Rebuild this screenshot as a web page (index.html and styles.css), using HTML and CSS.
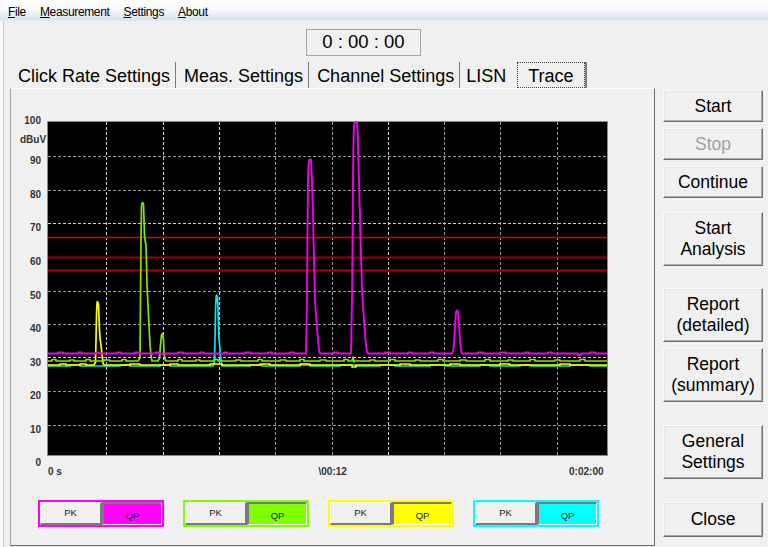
FILE: index.html
```html
<!DOCTYPE html>
<html>
<head>
<meta charset="utf-8">
<title>Trace</title>
<link rel="stylesheet" href="styles.css">
</head>
<body>
<div class="menubar">
  <span class="menu"><u>F</u>ile</span>
  <span class="menu"><u>M</u>easurement</span>
  <span class="menu"><u>S</u>ettings</span>
  <span class="menu"><u>A</u>bout</span>
</div>
<div class="app">
  <div class="timer-row"><div class="timer">0 : 00 : 00</div></div>
  <div class="tabs">
    <div class="tab">Click Rate Settings</div>
    <div class="tab">Meas. Settings</div>
    <div class="tab">Channel Settings</div>
    <div class="tab lisn">LISN</div>
    <div class="tab active"><span class="focus">Trace</span></div>
  </div>
  <div class="main">
    <div class="panel">
      <svg class="chart" width="643" height="392" viewBox="11 89 643 392" xmlns="http://www.w3.org/2000/svg">
        <rect x="47.5" y="121.5" width="560" height="334" fill="#000" stroke="#8a8a8a"/>
        <g class="vgrid" stroke-dasharray="3 2">
          <line class="w" x1="106.5" y1="122" x2="106.5" y2="455"/>
          <line class="w" x1="163.5" y1="122" x2="163.5" y2="455"/>
          <line class="w" x1="219.5" y1="122" x2="219.5" y2="455"/>
          <line class="g" x1="275.5" y1="122" x2="275.5" y2="455"/>
          <line class="g" x1="332.5" y1="122" x2="332.5" y2="455"/>
          <line class="w" x1="388.5" y1="122" x2="388.5" y2="455"/>
          <line class="g" x1="444.5" y1="122" x2="444.5" y2="455"/>
          <line class="g" x1="500.5" y1="122" x2="500.5" y2="455"/>
          <line class="g" x1="557.5" y1="122" x2="557.5" y2="455"/>
        </g>
        <g class="hgrid" stroke-dasharray="3 2">
          <line class="g" x1="48" y1="156.5" x2="607" y2="156.5"/>
          <line class="g" x1="48" y1="190.5" x2="607" y2="190.5"/>
          <line class="w" x1="48" y1="223.5" x2="607" y2="223.5"/>
          <line class="g" x1="48" y1="257.5" x2="607" y2="257.5"/>
          <line class="g" x1="48" y1="291.5" x2="607" y2="291.5"/>
          <line class="g" x1="48" y1="324.5" x2="607" y2="324.5"/>
          <line class="w" x1="48" y1="357.5" x2="607" y2="357.5"/>
          <line class="g" x1="48" y1="391.5" x2="607" y2="391.5"/>
          <line class="g" x1="48" y1="425.5" x2="607" y2="425.5"/>
        </g>
        <line x1="48" y1="237.5" x2="607" y2="237.5" stroke="#e00000" stroke-width="1.4"/>
        <line x1="48" y1="257.5" x2="607" y2="257.5" stroke="#a00000" stroke-width="2"/>
        <line x1="48" y1="270.5" x2="607" y2="270.5" stroke="#b00000" stroke-width="2"/>

        <path class="tr cy" d="M48 366 H70 V365 H80 V366 H120 V365 H130 V366 H160 V365 H170 V366 H213 L214.5 362 L215 340 L215.5 310 L216 298 L216.5 295 L217.5 297 L218 310 L218.5 325 L219 338 L220 350 L221 360 L222 366 H250 V365 H262 V366 H300 V365 H310 V366 H340 V365 H355 V366 H380 V365 H395 V366 H430 V365 H445 V366 H480 V365 H490 V366 H520 V365 H530 V366 H570 V365 H590 V366 H607"/>
        <path class="tr ye" d="M48 365 H60 V364 H66 V365 H80 V364 H86 V365 H94 L95.5 362 L96 340 L96.5 315 L97 303 L97.5 301.5 L98.5 304 L99 318 L99.5 330 L100 338 L101 345 L102 355 L103 363 L104 365 H130 V364 H140 V365 H170 V364 H178 V365 H210 V364 H222 V365 H260 V364 H270 V365 H300 V364 H310 V365 H352 V367 H356 V365 H400 V364 H410 V365 H450 V364 H460 V365 H500 V364 H510 V365 H560 V364 H570 V365 H607"/>
        <path class="tr gr" d="M48 361 H52 V359.5 H56 V361 H70 V360 H74 V361 H86 V359.5 H90 V361 H104 V360 H110 V361 H122 V359.5 H126 V361 H138 L140 358 L140.5 300 L141 240 L141.5 205 L142.5 202.5 L143.5 204 L144 220 L144.5 236 L146 246 L146.5 262 L147 285 L148 305 L149 325 L150 345 L151 356 L152 361 H158 L159.5 358 L160.5 345 L161.5 335 L162.5 333.5 L163.5 340 L164 352 L165 359 L166 361 H178 V359.5 H182 V361 H196 V360 H200 V361 H214 V359.5 H218 V361 H236 V360 H241 V361 H258 V359.5 H262 V361 H280 V360 H286 V361 H300 V359.5 H304 V361 H320 V360 H326 V361 H344 V359.5 H348 V361 H352 L353 357 L354 362 L355 361 H370 V360 H375 V361 H390 V359.5 H395 V361 H415 V360 H420 V361 H438 V359.5 H443 V361 H460 V360 H466 V361 H485 V359.5 H490 V361 H508 V360 H513 V361 H530 V359.5 H535 V361 H555 V360 H560 V361 H580 V359.5 H585 V361 H607"/>
        <path class="tr ma" d="M48 353.5 H58 V352.5 H63 V353.5 H78 V352.5 H82 V353.5 H96 V352.5 H99 V353.5 H117 V352.5 H121 V353.5 H135 V352.5 H140 V353.5 H156 V352.5 H159 V353.5 H178 V352.5 H183 V353.5 H200 V352.5 H204 V353.5 H224 V352.5 H227 V353.5 H245 V352.5 H251 V353.5 H268 V352.5 H272 V353.5 H290 V352.5 H294 V353.5 H306 L307 300 L307.5 230 L308 180 L308.5 165 L309 160 L311 159.5 L311.5 170 L312 180 L312.5 200 L313 210 L313.5 240 L314 255 L314.5 280 L315 300 L316 315 L317 327 L318 340 L319 350 L320 353.5 H333 V352.5 H338 V353.5 H351 L352 300 L352.5 250 L353 180 L353.5 140 L354 125 L354.5 122.5 L357 122.5 L357.5 130 L358 140 L358.5 165 L359 180 L359.5 200 L360 215 L360.5 240 L361 255 L361.5 270 L362 290 L363 305 L364 320 L365 335 L366 345 L367 352 L368 353.5 H385 V352.5 H390 V353.5 H408 V352.5 H412 V353.5 H430 V352.5 H434 V353.5 H452 L453.5 350 L454.5 335 L455.5 318 L456 312 L457.5 310.5 L458.5 315 L459 325 L460 340 L461 350 L462 353.5 H478 V352.5 H483 V353.5 H500 V352.5 H506 V353.5 H525 V352.5 H529 V353.5 H548 V352.5 H552 V353.5 H578 V355 H581 V353.5 H590 V352.5 H595 V353.5 H607"/>

        <g class="ax">
          <text x="41" y="123.6" text-anchor="end">100</text>
          <text x="33" y="142.6" text-anchor="middle">dBuV</text>
          <text x="41" y="164.3" text-anchor="end">90</text>
          <text x="41" y="197.9" text-anchor="end">80</text>
          <text x="41" y="231.4" text-anchor="end">70</text>
          <text x="41" y="265" text-anchor="end">60</text>
          <text x="41" y="298.5" text-anchor="end">50</text>
          <text x="41" y="332" text-anchor="end">40</text>
          <text x="41" y="365.6" text-anchor="end">30</text>
          <text x="41" y="399.2" text-anchor="end">20</text>
          <text x="41" y="432.7" text-anchor="end">10</text>
          <text x="41" y="466.3" text-anchor="end">0</text>
          <text x="48" y="475">0 s</text>
          <text x="318.5" y="475">\00:12</text>
          <text x="603.5" y="475" text-anchor="end">0:02:00</text>
        </g>
      </svg>
      <div class="legend">
        <div class="lg m"><div class="pk">PK</div><div class="qp">QP</div></div>
        <div class="lg g"><div class="pk">PK</div><div class="qp">QP</div></div>
        <div class="lg y"><div class="pk">PK</div><div class="qp">QP</div></div>
        <div class="lg c"><div class="pk">PK</div><div class="qp">QP</div></div>
      </div>
    </div>
    <div class="side">
      <div class="btn">Start</div>
      <div class="btn disabled">Stop</div>
      <div class="btn">Continue</div>
      <div class="btn tall gap">Start<br>Analysis</div>
      <div class="btn tall gap2">Report<br>(detailed)</div>
      <div class="btn tall">Report<br>(summary)</div>
      <div class="btn tall gap3">General<br>Settings</div>
      <div class="btn close gap3">Close</div>
    </div>
  </div>
</div>
</body>
</html>
```
FILE: styles.css
```css
html, body {
  margin: 0;
  padding: 0;
}
body {
  width: 768px;
  height: 547px;
  overflow: hidden;
  background: linear-gradient(to right, #fafafa 3px, #f0f0f0 3px);
  font-family: "Liberation Sans", Arial, sans-serif;
  color: #000;
}
.menubar {
  height: 21px;
  box-sizing: border-box;
  display: flex;
  align-items: flex-end;
  padding: 0 0 1px 1px;
  background: linear-gradient(#ffffff 0%, #f8f9fc 45%, #dde4ef 100%);
  border-bottom: 1px solid #e4e8f0;
  font-size: 12px;
  letter-spacing: -0.35px;
}
.menu {
  padding: 0 7px;
  line-height: 14px;
}
.menu u {
  text-decoration: underline;
}
.app {
  margin-left: 3px;
  border-left: 1px solid #c8c8c8;
  height: 526px;
  background: #f0f0f0;
}
.timer-row {
  padding-top: 8px;
  padding-left: 302px;
}
.timer {
  width: 115px;
  height: 27px;
  box-sizing: border-box;
  border: 1px solid #a4a4a4;
  text-align: center;
  font-size: 18.5px;
  line-height: 23px;
  padding-bottom: 2px;
}
.tabs {
  display: flex;
  margin-top: 6px;
  padding-left: 6px;
  height: 26px;
  font-size: 18px;
}
.tab {
  box-sizing: border-box;
  height: 26px;
  padding: 3px 5px 0 8px;
  line-height: 23px;
  border-right: 1px solid #7a7a7a;
  white-space: nowrap;
}
.tab.lisn {
  border-right: none;
  padding: 3px 6px 0 6px;
}
.tab.active {
  margin-left: 5px;
  padding: 0;
  border-right: 2px solid #7a7a7a;
}
.focus {
  display: block;
  box-sizing: border-box;
  height: 26px;
  border: 1px dotted #404040;
  padding: 2px 10px 0 10px;
  line-height: 23px;
}
.main {
  display: flex;
  padding-left: 6px;
  align-items: flex-start;
}
.panel {
  width: 645px;
  height: 458px;
  box-sizing: border-box;
  border-style: solid;
  border-width: 1px;
  border-color: #ffffff #6e6e6e #6e6e6e #a0a0a0;
}
.chart {
  display: block;
}
.vgrid line, .hgrid line {
  stroke-width: 1;
}
.vgrid .w, .hgrid .w {
  stroke: #d0d0d0;
}
.vgrid .g, .hgrid .g {
  stroke: #989898;
}
.tr {
  fill: none;
  stroke-width: 1.7;
  stroke-linejoin: round;
}
.tr.ma { stroke: #f000f0; stroke-width: 1.9; }
.tr.gr { stroke: #84e600; }
.tr.ye { stroke: #ffff00; }
.tr.cy { stroke: #00e6f0; }
.ax text {
  font-family: "Liberation Sans", Arial, sans-serif;
  font-size: 10px;
  font-weight: bold;
  fill: #333;
}
.legend {
  display: flex;
  gap: 19px;
  margin-top: 19px;
  padding-left: 27px;
}
.lg {
  width: 126px;
  height: 27px;
  box-sizing: border-box;
  border: 2px solid;
  display: flex;
  font-size: 9.5px;
  color: #1a1a1a;
}
.pk {
  flex: 0 0 62px;
  box-sizing: border-box;
  border-style: solid;
  border-width: 1px 2px 2px 1px;
  border-color: #ffffff #7a7a7a #7a7a7a #ffffff;
  background: #f0f0f0;
  display: flex;
  align-items: center;
  justify-content: center;
  padding-bottom: 1px;
}
.qp {
  flex: 1;
  box-sizing: border-box;
  border-style: solid;
  border-width: 2px 1px 1px 2px;
  border-color: #7a7a7a #ffffff #ffffff #7a7a7a;
  display: flex;
  align-items: center;
  justify-content: center;
  padding-top: 3px;
}
.lg.m { border-color: #ff00ff; }
.lg.m .qp { background: #ff00ff; border-color: #7a7a7a #ffffff #ffffff #7a7a7a; }
.lg.g { border-color: #80ff00; }
.lg.g .qp { background: #80ff00; border-color: #7a7a7a #ffffff #ffffff #7a7a7a; }
.lg.y { border-color: #ffff00; }
.lg.y .qp { background: #ffff00; border-color: #7a7a7a #ffffff #ffffff #7a7a7a; }
.lg.c { border-color: #00ffff; }
.lg.c .qp { background: #00ffff; border-color: #7a7a7a #ffffff #ffffff #7a7a7a; }
.side {
  margin-left: 8px;
  margin-top: 2px;
  display: flex;
  flex-direction: column;
  gap: 6px;
}
.btn {
  width: 100px;
  height: 32px;
  box-sizing: border-box;
  border: 1px solid;
  border-color: #fcfcfc #6e6e6e #6e6e6e #fcfcfc;
  box-shadow: inset -1px -1px 0 #a8a8a8, inset 1px 1px 0 #e4e4e4;
  background: #f0f0f0;
  display: flex;
  align-items: center;
  justify-content: center;
  text-align: center;
  font-size: 17.5px;
  line-height: 21px;
}
.btn.disabled {
  color: #a0a0a0;
}
.btn.tall {
  height: 54px;
}
.btn.close {
  height: 35px;
}
.btn.gap {
  margin-top: 8px;
}
.btn.gap2 {
  margin-top: 16px;
}
.btn.gap3 {
  margin-top: 17px;
}
```
